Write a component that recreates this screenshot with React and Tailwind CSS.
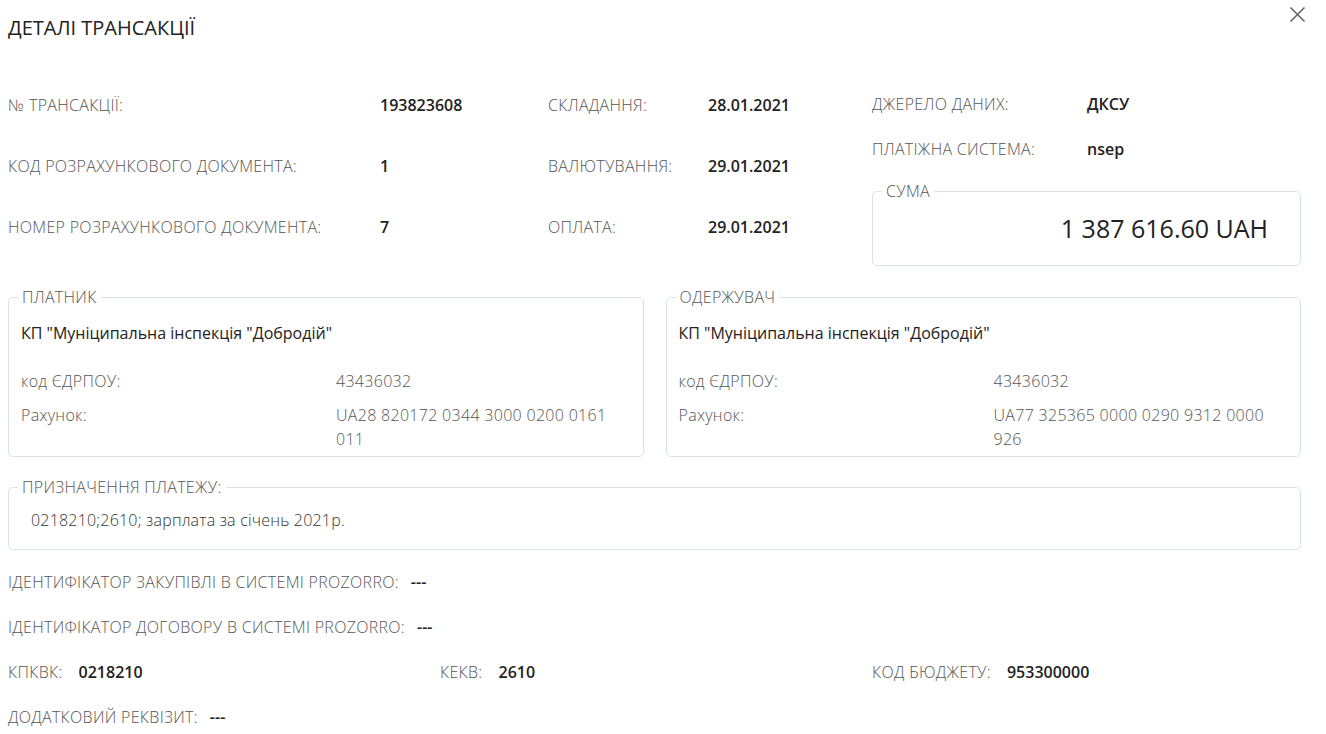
import React from "react";

const font = { fontFamily: '"Open Sans", "Noto Sans", sans-serif' };

const Label = ({ children, className = "" }) => (
  <span className={`font-light tracking-[0.3px] text-[#555] ${className}`}>{children}</span>
);

const Value = ({ children, className = "" }) => (
  <span className={`font-semibold text-[#222] ${className}`}>{children}</span>
);

const Row = ({ label, value, labelW, h }) => (
  <div className={`flex items-center ${h}`}>
    <Label className={labelW}>{label}</Label>
    <Value>{value}</Value>
  </div>
);

const Box = ({ title, children, className = "" }) => (
  <fieldset className={`border border-[#dae2ea] rounded-[5px] px-3 ${className}`}>
    <legend className="-ml-[3px] px-[4px] font-light tracking-[0.3px] text-[#555] leading-5">{title}</legend>
    {children}
  </fieldset>
);

const Party = ({ title, name, code, account }) => (
  <Box title={title} className="pt-[14px] pb-[5px]">
    <div className="text-[#222] leading-6">{name}</div>
    <div className="mt-[24px] flex leading-6 font-light tracking-[0.3px] text-[#555]">
      <div className="w-[315px] shrink-0">код ЄДРПОУ:</div>
      <div>{code}</div>
    </div>
    <div className="mt-[10px] flex leading-6 font-light tracking-[0.3px] text-[#555]">
      <div className="w-[315px] shrink-0">Рахунок:</div>
      <div className="w-[285px]">{account}</div>
    </div>
  </Box>
);

export default function App() {
  return (
    <div className="relative bg-white min-h-[734px] pl-2 pr-[25px] pt-[14px] text-[16px]" style={font}>
      <button className="absolute right-[20px] top-[6px] text-[#666]" aria-label="close">
        <svg width="17" height="17" viewBox="0 0 17 17" fill="none" stroke="currentColor" strokeWidth="1.6">
          <path d="M1.5 1.5 L15.5 15.5 M15.5 1.5 L1.5 15.5" />
        </svg>
      </button>

      <h2 className="text-[20px] leading-7 text-[#222]">ДЕТАЛІ ТРАНСАКЦІЇ</h2>

      <div className="grid grid-cols-[540px_324px_1fr]">
        <div className="pt-[32px]">
          <Row h="h-[61px]" labelW="w-[372px]" label="№ ТРАНСАКЦІЇ:" value="193823608" />
          <Row h="h-[61px]" labelW="w-[372px]" label="КОД РОЗРАХУНКОВОГО ДОКУМЕНТА:" value="1" />
          <Row h="h-[61px]" labelW="w-[372px]" label="НОМЕР РОЗРАХУНКОВОГО ДОКУМЕНТА:" value="7" />
        </div>
        <div className="pt-[32px]">
          <Row h="h-[61px]" labelW="w-[160px]" label="СКЛАДАННЯ:" value="28.01.2021" />
          <Row h="h-[61px]" labelW="w-[160px]" label="ВАЛЮТУВАННЯ:" value="29.01.2021" />
          <Row h="h-[61px]" labelW="w-[160px]" label="ОПЛАТА:" value="29.01.2021" />
        </div>
        <div className="pt-[40px]">
          <Row h="h-[44px]" labelW="w-[215px]" label="ДЖЕРЕЛО ДАНИХ:" value="ДКСУ" />
          <Row h="h-[45px]" labelW="w-[215px]" label="ПЛАТІЖНА СИСТЕМА:" value="nsep" />
          <Box title="СУМА" className="mt-[10px] pt-[11px] pb-[21px] pr-[32px]">
            <div className="text-right text-[25px] leading-8 text-[#222]">1 387 616.60 UAH</div>
          </Box>
        </div>
      </div>

      <div className="mt-[21px] grid grid-cols-2 gap-[22px]">
        <Party
          title="ПЛАТНИК"
          name={'КП "Муніципальна інспекція "Добродій"'}
          code="43436032"
          account="UA28 820172 0344 3000 0200 0161 011"
        />
        <Party
          title="ОДЕРЖУВАЧ"
          name={'КП "Муніципальна інспекція "Добродій"'}
          code="43436032"
          account="UA77 325365 0000 0290 9312 0000 926"
        />
      </div>

      <Box title="ПРИЗНАЧЕННЯ ПЛАТЕЖУ:" className="mt-[20px] pt-[11px] pb-[17px]">
        <div className="pl-[10px] leading-6 font-light tracking-[0.2px] text-[#333]">0218210;2610; зарплата за січень 2021р.</div>
      </Box>

      <div className="mt-[9px] flex flex-col">
        <div className="flex items-center gap-3 h-[45px]">
          <Label>ІДЕНТИФІКАТОР ЗАКУПІВЛІ В СИСТЕМІ PROZORRO:</Label>
          <Value>---</Value>
        </div>
        <div className="flex items-center gap-3 h-[45px]">
          <Label>ІДЕНТИФІКАТОР ДОГОВОРУ В СИСТЕМІ PROZORRO:</Label>
          <Value>---</Value>
        </div>
        <div className="grid grid-cols-[432px_432px_1fr] h-[45px] items-center">
          <div className="flex items-center gap-4">
            <Label>КПКВК:</Label>
            <Value>0218210</Value>
          </div>
          <div className="flex items-center gap-4">
            <Label>КЕКВ:</Label>
            <Value>2610</Value>
          </div>
          <div className="flex items-center gap-4">
            <Label>КОД БЮДЖЕТУ:</Label>
            <Value>953300000</Value>
          </div>
        </div>
        <div className="flex items-center gap-3 h-[45px]">
          <Label>ДОДАТКОВИЙ РЕКВІЗИТ:</Label>
          <Value>---</Value>
        </div>
      </div>
    </div>
  );
}
